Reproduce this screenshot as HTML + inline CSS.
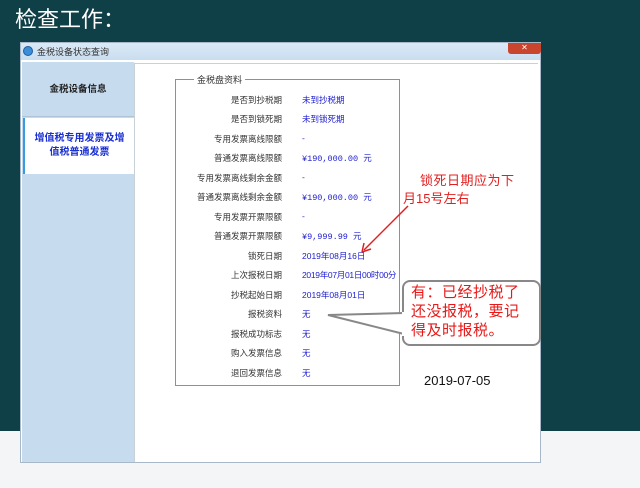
<!DOCTYPE html>
<html><head><meta charset="utf-8"><style>
*{margin:0;padding:0;box-sizing:border-box}
body{width:640px;height:488px;position:relative;overflow:hidden;background:#f3f5f7;font-family:"Liberation Sans","Noto Sans CJK SC",sans-serif}
.bg{position:absolute;left:0;top:0;width:640px;height:431px;background:#0f3f47}
.h{position:absolute;left:15px;top:6px;color:#fff;font-size:22px;line-height:28px}
.win{position:absolute;left:20px;top:42px;width:521px;height:421px;background:#fff;border:1px solid #a8b8c8}
.tb{position:absolute;left:0;top:0;width:519px;height:17px;background:linear-gradient(#dbe9f6,#c9ddf0)}
.tb span{position:absolute;left:16px;top:2px;font-size:9px;color:#333}
.ico{position:absolute;left:2px;top:3px;width:10px;height:10px;border-radius:50%;background:#3a8fd8;border:1px solid #1c5d9c}
.cl{position:absolute;left:487px;top:0;width:33px;height:11px;background:#c9452e;border-radius:0 0 3px 3px;color:#fff;font-size:8px;text-align:center;line-height:10px}
.lp{position:absolute;left:1px;top:19px;width:112px;height:400px;background:#c6dbee}
.t1{position:absolute;left:0;top:0;width:112px;height:55px;font-size:9.5px;font-weight:bold;text-align:center;line-height:55px;color:#222;border-bottom:1px solid #b0c4d8}
.t2{position:absolute;left:1px;top:56px;width:111px;height:56px;background:#fff;border-left:2px solid #3a9ae0;font-size:10px;font-weight:bold;color:#1a2fd0;text-align:center;padding-top:14px;line-height:14px}
.ct{position:absolute;left:113px;top:20px;width:404px;height:399px;border:1px solid #c8d0d8;border-right:none;border-bottom:none}
.gb{position:absolute;left:175px;top:79px;width:225px;height:307px;border:1px solid #909090}
.gt{position:absolute;left:194px;top:73px;background:#fff;padding:0 3px;font-size:9px;color:#333}
.r{position:absolute;font-size:8.5px;white-space:nowrap}
.l{right:358px;color:#333}
.v{left:302px;color:#2020d0}
.m{font-family:"Liberation Mono","Noto Sans CJK SC",monospace;font-size:8.5px}
.red{position:absolute;color:#e02020;font-size:13px;line-height:17px}
.cb{position:absolute;left:402px;top:280px;width:139px;height:66px;border:2px solid #888;border-radius:8px;background:#fff}
.cbt{position:absolute;left:411px;top:283px;color:#e81818;font-size:15px;line-height:19px;letter-spacing:0.5px}
.dt{position:absolute;left:424px;top:373px;font-size:13px;color:#111}
</style></head><body>
<div class="bg"></div>
<div class="h">检查工作：</div>
<div class="win">
<div class="tb"><div class="ico"></div><span>金税设备状态查询</span><div class="cl">✕</div></div>
<div class="lp"><div class="t1">金税设备信息</div><div class="t2">增值税专用发票及增<br>值税普通发票</div></div>
<div class="ct"></div>
</div>
<div class="gb"></div>
<div class="gt">金税盘资料</div>
<div class="r l" style="top:94px">是否到抄税期</div><div class="r v" style="top:94px">未到抄税期</div>
<div class="r l" style="top:113px">是否到锁死期</div><div class="r v" style="top:113px">未到锁死期</div>
<div class="r l" style="top:133px">专用发票离线限额</div><div class="r v" style="top:133px">-</div>
<div class="r l" style="top:152px">普通发票离线限额</div><div class="r v m" style="top:152px">¥190,000.00 元</div>
<div class="r l" style="top:172px">专用发票离线剩余金额</div><div class="r v" style="top:172px">-</div>
<div class="r l" style="top:191px">普通发票离线剩余金额</div><div class="r v m" style="top:191px">¥190,000.00 元</div>
<div class="r l" style="top:211px">专用发票开票限额</div><div class="r v" style="top:211px">-</div>
<div class="r l" style="top:230px">普通发票开票限额</div><div class="r v m" style="top:230px">¥9,999.99 元</div>
<div class="r l" style="top:250px">锁死日期</div><div class="r v" style="top:250px">2019年08月16日</div>
<div class="r l" style="top:269px">上次报税日期</div><div class="r v" style="top:269px;letter-spacing:-0.3px">2019年07月01日00时00分</div>
<div class="r l" style="top:289px">抄税起始日期</div><div class="r v" style="top:289px">2019年08月01日</div>
<div class="r l" style="top:308px">报税资料</div><div class="r v" style="top:308px">无</div>
<div class="r l" style="top:328px">报税成功标志</div><div class="r v" style="top:328px">无</div>
<div class="r l" style="top:347px">购入发票信息</div><div class="r v" style="top:347px">无</div>
<div class="r l" style="top:367px">退回发票信息</div><div class="r v" style="top:367px">无</div>
<div class="red" style="left:420px;top:172px;letter-spacing:0.5px">锁死日期应为下</div>
<div class="red" style="left:403px;top:190px">月15号左右</div>
<svg style="position:absolute;left:0;top:0" width="640" height="488">
<line x1="408" y1="206" x2="364" y2="250" stroke="#e02020" stroke-width="1.5"/>
<path d="M362 252 L364 243 M362 252 L371 249" stroke="#e02020" stroke-width="1.5" fill="none"/>
</svg>
<div class="cb"></div>
<svg style="position:absolute;left:0;top:0" width="640" height="488">
<path d="M404 313 L328 315 L404 334" fill="#fff" stroke="#888" stroke-width="2"/>
<rect x="402" y="312" width="4" height="24" fill="#fff"/>
</svg>
<div class="cbt">有：已经抄税了<br>还没报税，要记<br>得及时报税。</div>
<div class="dt">2019-07-05</div>
</body></html>
